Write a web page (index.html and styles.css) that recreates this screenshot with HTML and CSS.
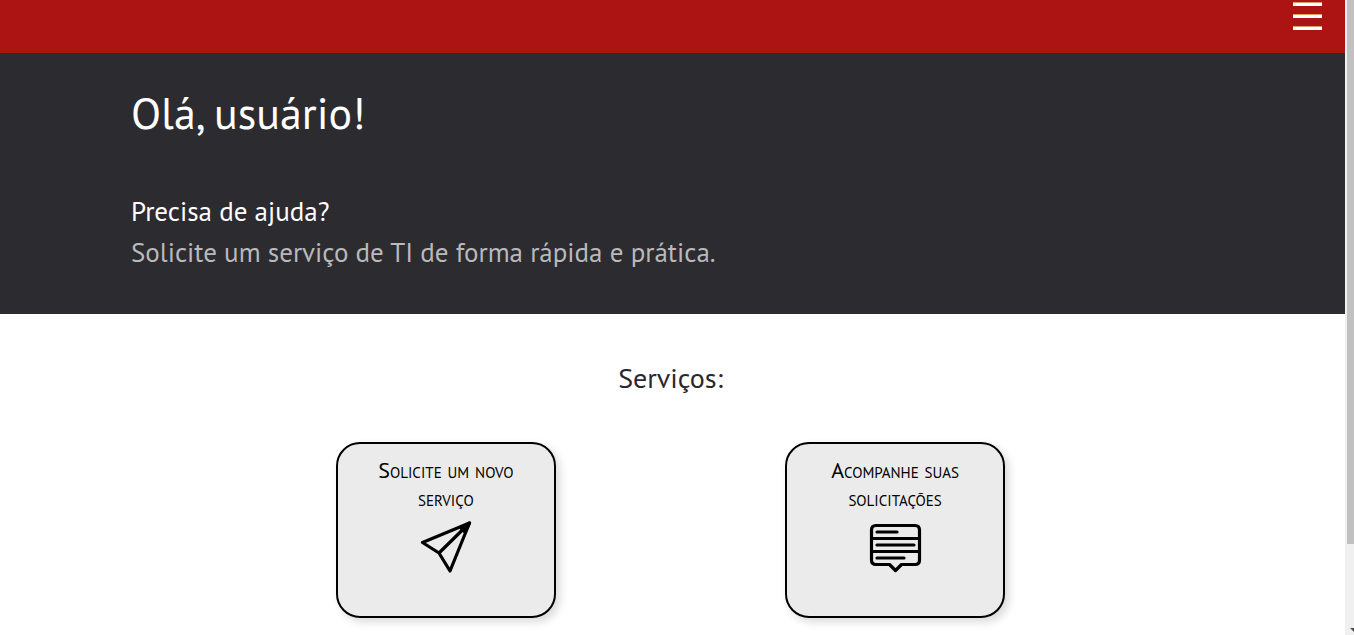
FILE: index.html
```html
<!DOCTYPE html>
<html lang="pt-BR">
<head>
<meta charset="utf-8">
<meta name="viewport" content="width=device-width, initial-scale=1">
<title>Serviços de TI</title>
<link rel="stylesheet" href="styles.css">
</head>
<body>
<div class="page">
  <header class="topbar">
    <button class="menu" type="button" aria-label="Menu"><span class="menu-line"></span><span class="menu-line"></span><span class="menu-line"></span></button>
  </header>
  <section class="hero">
    <h1 class="greeting">Olá, usuário!</h1>
    <p class="question">Precisa de ajuda?</p>
    <p class="answer">Solicite um serviço de TI de forma rápida e prática.</p>
  </section>
  <main class="services">
    <h2 class="services-title">Serviços:</h2>
    <div class="cards">
      <a class="card" href="#solicitar">
        <span class="card-text">Solicite um novo serviço</span>
        <svg class="icon" viewBox="0 0 54 54" aria-hidden="true"><path d="M50.5 4 3.500 23.500 20 34 31 52Z M50.500 4 20 34"/><path d="M50.500 4 42 9 46 13Z" class="solid"/></svg>
      </a>
      <a class="card" href="#acompanhar">
        <span class="card-text">Acompanhe suas solicitações</span>
        <svg class="icon" viewBox="0 0 54 54" aria-hidden="true"><path d="M7 6.500H47Q51.500 6.500 51.500 11V41Q51.500 45.500 47 45.500H33.500L27.500 51.500 21.500 45.500H8Q3.500 45.500 3.500 41V11Q3.500 6.500 8 6.500M3.500 19.500H51.500M3.500 32.500H51.500M9 13H29M9 26H46M9 39H36"/></svg>
      </a>
    </div>
  </main>
</div>
<div class="scrollbar" aria-hidden="true">
  <div class="scroll-thumb"></div>
  <svg class="scroll-arrow" viewBox="0 0 4 4"><path d="M0 0H4V4Z"/></svg>
</div>
</body>
</html>
```
FILE: styles.css
```css
* {
  box-sizing: border-box;
}

body {
  margin: 0;
  display: grid;
  grid-template-columns: 1fr 9px;
  height: 100vh;
  overflow: hidden;
  background: #fff;
  color: #29282d;
  font-family: "PT Sans", "Noto Sans", sans-serif;
}

h1, h2, p {
  margin: 0;
  font-weight: 400;
}

.topbar {
  display: flex;
  justify-content: flex-end;
  height: 53px;
  padding: 2px 23px 0 0;
  background: #ac1414;
}

.menu {
  display: flex;
  flex-direction: column;
  gap: 8px;
  width: 29px;
  padding: 0;
  border: 0;
  background: none;
  cursor: pointer;
}

.menu-line {
  width: 29px;
  height: 4px;
  border-top: 1px solid #d9a066;
  background: #fff;
}

.hero {
  padding: 30px 131px 41px;
  background: #2c2b30;
  color: #fff;
}

.greeting {
  margin-bottom: 48px;
  font-size: 44px;
  line-height: 60px;
}

.question,
.answer {
  font-size: 27px;
  line-height: 41px;
}

.answer {
  color: #b9b9bb;
}

.services {
  padding: 42px 4px 0 0;
}

.services-title {
  margin-bottom: 42px;
  font-size: 28px;
  line-height: 44px;
  text-align: center;
}

.cards {
  display: flex;
  justify-content: space-around;
  width: 67%;
  margin: 0 auto;
}

.card {
  display: flex;
  flex-direction: column;
  align-items: center;
  width: 220px;
  height: 176px;
  padding: 12px 24px;
  border: 2px solid #000;
  border-radius: 24px;
  background: #ebebeb;
  box-shadow: 4px 4px 8px rgba(0, 0, 0, 0.15);
  color: #000;
  text-decoration: none;
}

.card-text {
  font-size: 22px;
  font-variant: small-caps;
  line-height: 28px;
  text-align: center;
}

.icon {
  width: 54px;
  height: 54px;
  margin-top: 7px;
  fill: none;
  stroke: #000;
  stroke-width: 3.2;
  stroke-linecap: round;
  stroke-linejoin: round;
}

.solid {
  fill: #000;
}

.scrollbar {
  display: flex;
  flex-direction: column;
  justify-content: space-between;
  align-items: flex-end;
  padding-bottom: 3px;
  background: #f0f0f0;
}

.scroll-thumb {
  width: 7px;
  height: 86%;
  background: #c1c1c1;
}

.scroll-arrow {
  width: 4px;
  height: 4px;
  fill: #505050;
}
```
